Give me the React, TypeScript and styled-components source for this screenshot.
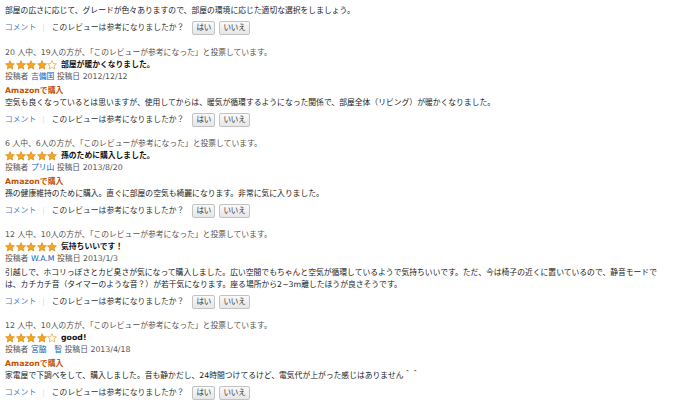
import React from "react";
import styled, { createGlobalStyle } from "styled-components";

const Global = createGlobalStyle`
  html, body { margin: 0; padding: 0; background: #fff; }
  body { font-family: "DejaVu Sans", "Noto Sans CJK JP", sans-serif; }
`;

const Page = styled.div`
  width: 660px;
  padding: 5px 0 0 5px;
  font-size: 7.8px;
  line-height: 12px;
  color: #222;
`;

const Review = styled.div<{ $first?: boolean }>`
  display: flex;
  flex-direction: column;
  margin-bottom: ${(p) => (p.$first ? "11px" : "10px")};
`;

const Helpful = styled.div`
  color: #555;
  height: 12px;
`;

const TitleRow = styled.div`
  display: flex;
  align-items: center;
  gap: 4px;
  height: 12px;
`;

const Stars = styled.span`
  display: inline-flex;
  gap: 0.5px;
`;

const Title = styled.span`
  font-weight: bold;
  color: #111;
`;

const Byline = styled.div`
  color: #555;
  height: 12px;
`;

const Link = styled.a`
  color: #0066c0;
  text-decoration: none;
`;

const Verified = styled.div`
  margin-top: 2px;
  color: #c45500;
  font-weight: bold;
`;

const Body = styled.div<{ $gap?: boolean }>`
  color: #222;
  margin-top: ${(p) => (p.$gap ? "2px" : "0")};
`;

const Actions = styled.div`
  display: flex;
  align-items: center;
  height: 16px;
  margin-top: 3px;
`;

const CommentLink = styled.a`
  color: #4a80c8;
  text-decoration: none;
`;

const Sep = styled.span`
  color: #ddd;
  margin: 0 7px 0 6px;
`;

const Question = styled.span`
  color: #333;
  margin-right: 8px;
`;

const Btn = styled.button`
  font: inherit;
  font-size: 7.5px;
  line-height: 12px;
  height: 14px;
  padding: 0 3px;
  margin-right: 4px;
  color: #333;
  border: 1px solid #c3c3c3;
  border-radius: 2px;
  background: linear-gradient(#f9f9f9, #e6e6e6);
`;

const Star: React.FC<{ filled: boolean }> = ({ filled }) => (
  <svg width="10" height="10" viewBox="0 0 24 24">
    <path
      d="M12 1.5l3.1 7.1 7.6.6-5.8 5 1.8 7.5L12 17.7l-6.7 4 1.8-7.5-5.8-5 7.6-.6z"
      fill={filled ? "#f5a623" : "#fff"}
      stroke={filled ? "#d78a0c" : "#e0a030"}
      strokeWidth="1.6"
      strokeLinejoin="round"
    />
  </svg>
);

const ActionRow: React.FC = () => (
  <Actions>
    <CommentLink href="#">コメント</CommentLink>
    <Sep>|</Sep>
    <Question>このレビューは参考になりましたか？</Question>
    <Btn>はい</Btn>
    <Btn>いいえ</Btn>
  </Actions>
);

type R = {
  helpful: string;
  stars: number;
  title: string;
  author: string;
  date: string;
  verified: boolean;
  body: string;
};

const reviews: R[] = [
  {
    helpful: "20 人中、19人の方が、「このレビューが参考になった」と投票しています。",
    stars: 4,
    title: "部屋が暖かくなりました。",
    author: "吉備国",
    date: "2012/12/12",
    verified: true,
    body: "空気も良くなっているとは思いますが、使用してからは、暖気が循環するようになった関係で、部屋全体（リビング）が暖かくなりました。",
  },
  {
    helpful: "6 人中、6人の方が、「このレビューが参考になった」と投票しています。",
    stars: 5,
    title: "孫のために購入しました。",
    author: "プリ山",
    date: "2013/8/20",
    verified: true,
    body: "孫の健康維持のために購入。直ぐに部屋の空気も綺麗になります。非常に気に入りました。",
  },
  {
    helpful: "12 人中、10人の方が、「このレビューが参考になった」と投票しています。",
    stars: 5,
    title: "気持ちいいです！",
    author: "W.A.M",
    date: "2013/1/3",
    verified: false,
    body: "引越しで、ホコリっぽさとカビ臭さが気になって購入しました。広い空間でもちゃんと空気が循環しているようで気持ちいいです。ただ、今は椅子の近くに置いているので、静音モードでは、カチカチ音（タイマーのような音？）が若干気になります。座る場所から2~3m離したほうが良さそうです。",
  },
  {
    helpful: "12 人中、10人の方が、「このレビューが参考になった」と投票しています。",
    stars: 4,
    title: "good!",
    author: "宮脇　智",
    date: "2013/4/18",
    verified: true,
    body: "家電屋で下調べをして、購入しました。音も静かだし、24時間つけてるけど、電気代が上がった感じはありません＾＾",
  },
];

export default function App() {
  return (
    <Page>
      <Global />
      <Review $first>
        <Body>部屋の広さに応じて、グレードが色々ありますので、部屋の環境に応じた適切な選択をしましょう。</Body>
        <ActionRow />
      </Review>
      {reviews.map((r, i) => (
        <Review key={i}>
          <Helpful>{r.helpful}</Helpful>
          <TitleRow>
            <Stars>
              {[0, 1, 2, 3, 4].map((k) => (
                <Star key={k} filled={k < r.stars} />
              ))}
            </Stars>
            <Title>{r.title}</Title>
          </TitleRow>
          <Byline>
            投稿者 <Link href="#">{r.author}</Link> 投稿日 {r.date}
          </Byline>
          {r.verified && <Verified>Amazonで購入</Verified>}
          <Body $gap={!r.verified}>{r.body}</Body>
          <ActionRow />
        </Review>
      ))}
    </Page>
  );
}
